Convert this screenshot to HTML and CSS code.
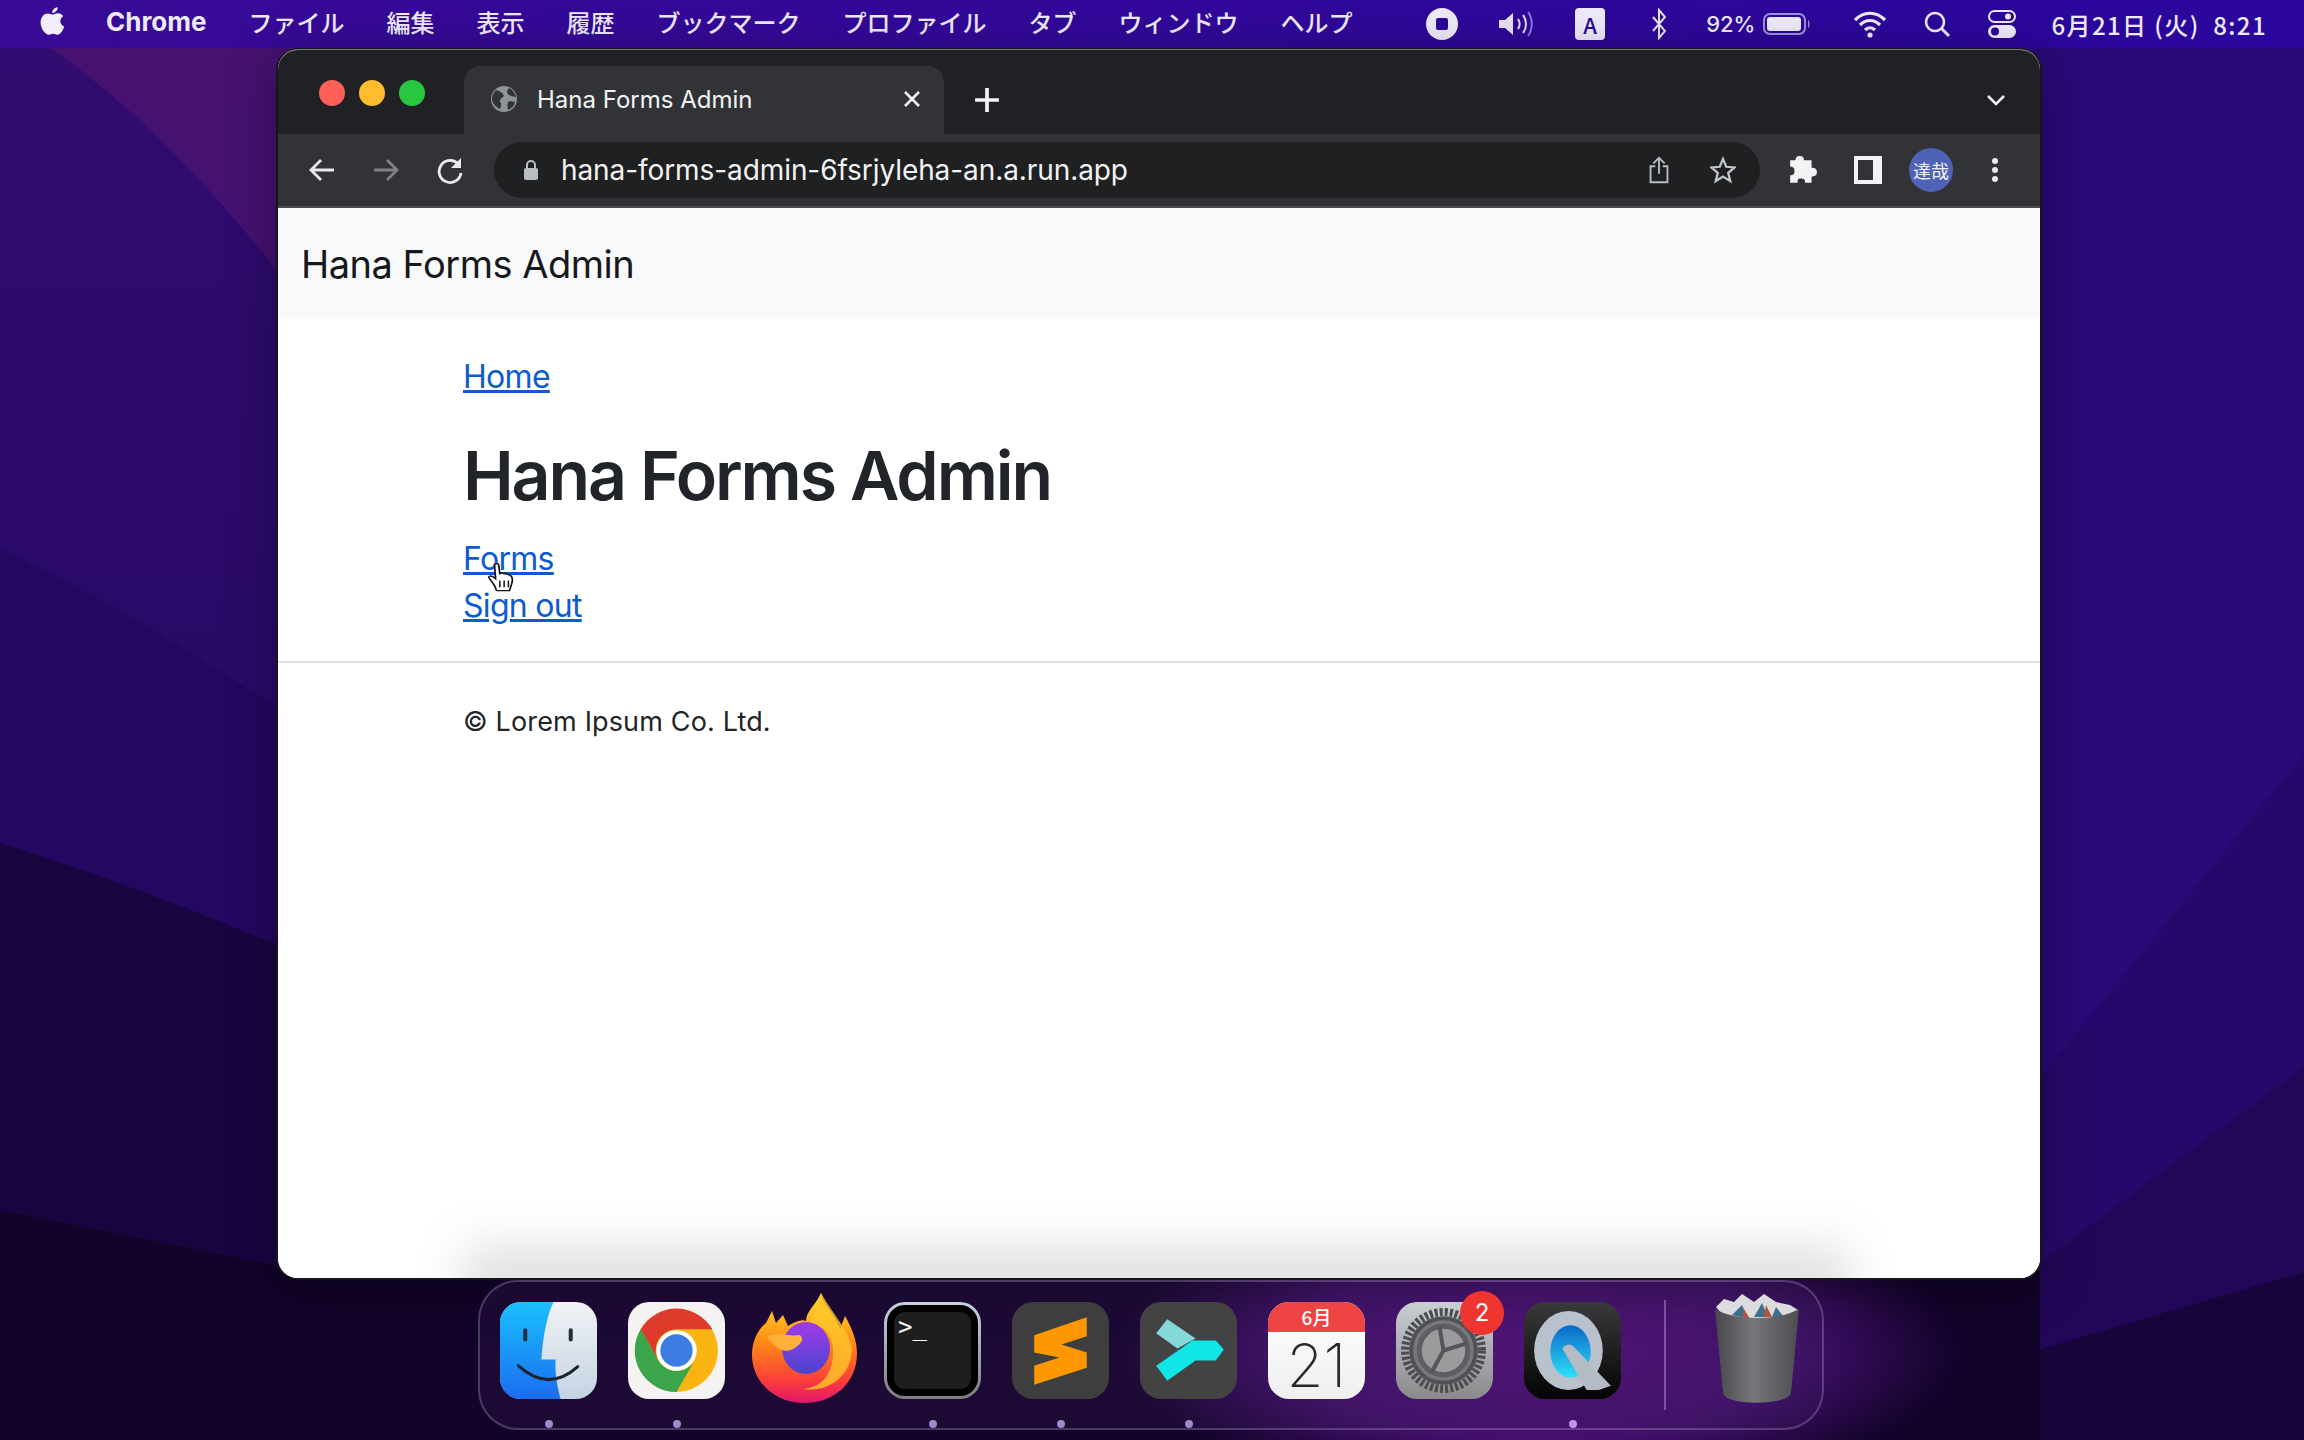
FILE: index.html
```html
<!DOCTYPE html>
<html lang="ja">
<head>
    <meta charset="UTF-8">
    <title>Hana Forms Admin</title>
    <link rel="stylesheet" href="styles.css">
</head>
<body>
    <svg class="wallpaper" viewBox="0 0 2304 1440" preserveAspectRatio="none">
        <defs>
            <linearGradient id="wallLeft" x1="0" y1="0" x2="0" y2="1">
                <stop offset="0" stop-color="#300c70"/>
                <stop offset="1" stop-color="#290a66"/>
            </linearGradient>
            <radialGradient id="wallGlow">
                <stop offset="0" stop-color="#571080"/>
                <stop offset="0.6" stop-color="#42106c"/>
                <stop offset="1" stop-color="#42106c" stop-opacity="0"/>
            </radialGradient>
        </defs>
        <rect width="2304" height="1440" fill="#2a0a78"/>
        <rect y="48" width="300" height="700" fill="url(#wallLeft)"/>
        <path d="M50 48Q170 130 300 300V48Z" fill="#451270"/>
        <path d="M0 549Q150 620 300 724V1440H0Z" fill="#230760"/>
        <path d="M0 843Q150 890 300 955V1440H0Z" fill="#180540"/>
        <path d="M2030 1090L2304 754V1440H2030Z" fill="#27086a"/>
        <path d="M2030 1270L2304 1067V1440H2030Z" fill="#220758"/>
        <path d="M2030 1352L2304 1272V1440H2030Z" fill="#17043a"/>
        <path d="M0 1210L300 1270H2040V1440H0Z" fill="#120329"/>
        <ellipse cx="1540" cy="1350" rx="420" ry="150" fill="url(#wallGlow)"/>
    </svg>

    <!-- menu bar -->
    <header class="menubar">
        <nav class="menu-left">
            <svg class="apple" viewBox="0 0 24 28"><path d="M17 1c.2 2.300-2 5.200-5 5 0-2.500 2.400-4.800 5-5zM12 7.500c1.300 0 2.800-1.200 5-1.200 2 0 3.800 1 4.800 2.600-3.800 2.200-3 7.600.9 9-1 3-3.300 7.300-5.700 7.300-1.500 0-2.300-1-4-1s-2.600 1-4 1C6 25.200 2 19.500 2 14.500c0-5 3.300-7.900 6.300-7.900 1.600 0 2.800.9 3.700.9z" fill="#f1edfb"/></svg>
            <b class="app-name">Chrome</b>
            <span>ファイル</span>
            <span>編集</span>
            <span>表示</span>
            <span>履歴</span>
            <span>ブックマーク</span>
            <span>プロファイル</span>
            <span>タブ</span>
            <span>ウィンドウ</span>
            <span>ヘルプ</span>
        </nav>
        <div class="menu-right">
            <svg class="status-rec" viewBox="0 0 32 32"><circle cx="16" cy="16" r="16" fill="#efeafb"/><rect x="10" y="10" width="12" height="12" rx="2" fill="#2c0699"/></svg>
            <svg class="status-vol" viewBox="0 0 36 28"><path d="M2 10h6l8-7v22l-8-7H2z" fill="#e6e0f6"/><path d="M21 9c2 3 2 7 0 10M26 5c4 5 4 13 0 18" fill="none" stroke="#e6e0f6" stroke-width="2"/><path d="M31 2c5 7 5 17 0 24" fill="none" stroke="#8a79d8" stroke-width="2"/></svg>
            <span class="status-ime">A</span>
            <svg class="status-bt" viewBox="0 0 18 32"><path d="M3 9l12 14-6 7V2l6 7L3 23" fill="none" stroke="#e6e0f6" stroke-width="2"/></svg>
            <span class="status-pct">92%</span>
            <svg class="status-batt" viewBox="0 0 48 26"><rect x="1" y="3" width="41" height="20" rx="6" fill="none" stroke="#9e92dc" stroke-width="2"/><rect x="4" y="6" width="34" height="14" rx="3" fill="#efeafb"/><path d="M45 9c2 1 2 7 0 8z" fill="#9e92dc"/></svg>
            <svg class="status-wifi" viewBox="0 0 34 28"><path d="M2 10c9-9 21-9 30 0M7 15c6-6 14-6 20 0M12 20c3-3 7-3 10 0" fill="none" stroke="#efeafb" stroke-width="3.200"/><circle cx="17" cy="25" r="2.600" fill="#efeafb"/></svg>
            <svg class="status-search" viewBox="0 0 28 28"><circle cx="12" cy="12" r="9" fill="none" stroke="#efeafb" stroke-width="2.600"/><path d="M18.500 18.500L26 26" stroke="#efeafb" stroke-width="3"/></svg>
            <svg class="status-ctrl" viewBox="0 0 30 30"><rect x="2" y="2" width="26" height="11" rx="5.500" fill="none" stroke="#efeafb" stroke-width="2"/><circle cx="21" cy="7.500" r="3" fill="#efeafb"/><rect x="1" y="16" width="28" height="13" rx="6.500" fill="#efeafb"/><circle cx="8" cy="22.500" r="4" fill="#2c0699"/></svg>
            <span class="clock">6月21日 (火)&nbsp; 8:21</span>
        </div>
    </header>

    <!-- browser window -->
    <section class="browser">
        <div class="tabstrip">
            <div class="traffic">
                <i class="light red"></i><i class="light yellow"></i><i class="light green"></i>
            </div>
            <div class="tab">
                <svg class="favicon" viewBox="0 0 28 28"><circle cx="14" cy="14" r="13" fill="#8f9296"/><path d="M6 5c4 1 7 3 8 6-2 2-5 3-4 6 2 2 1 4 0 7-4-2-8-6-8-10 0-4 2-7 4-9zM19 3c3 1 6 5 7 9l-5-1c-3-1-4-3-4-5zM19 16l6 1c-1 4-3 6-7 8 0-3-2-5 1-9z" fill="#323337"/></svg>
                <span class="tab-title">Hana Forms Admin</span>
                <svg class="tab-close" viewBox="0 0 20 20"><path d="M3 3l14 14M17 3L3 17" stroke="#f1f3f4" stroke-width="2.600"/></svg>
            </div>
            <svg class="newtab" viewBox="0 0 24 24"><path d="M12 1v22M1 12h22" stroke="#f1f3f4" stroke-width="3.400"/></svg>
            <svg class="tab-list" viewBox="0 0 20 12"><path d="M2 2l8 8 8-8" fill="none" stroke="#f1f3f4" stroke-width="2.600"/></svg>
        </div>
        <div class="toolbar">
            <svg class="tool" viewBox="0 0 28 28"><path d="M26 14H4M13 4L3 14l10 10" fill="none" stroke="#e8eaed" stroke-width="2.800"/></svg>
            <svg class="tool" viewBox="0 0 28 28"><path d="M2 14h22M15 4l10 10-10 10" fill="none" stroke="#7f8184" stroke-width="2.800"/></svg>
            <svg class="tool" viewBox="0 0 28 28"><path d="M23 9a11 11 0 1 0 2 8" fill="none" stroke="#e8eaed" stroke-width="2.800"/><path d="M25 2v10H15z" fill="#e8eaed"/></svg>
            <div class="omnibox">
                <svg class="lock" viewBox="0 0 16 22"><path d="M4 9V6a4 4 0 0 1 8 0v3" fill="none" stroke="#b9bcc0" stroke-width="2"/><rect x="1" y="9" width="14" height="12" rx="2" fill="#b9bcc0"/></svg>
                <span class="url">hana-forms-admin-6fsrjyleha-an.a.run.app</span>
                <svg class="omni-icon" viewBox="0 0 24 32"><path d="M12 20V3M6 9l6-6 6 6" fill="none" stroke="#b9bcc0" stroke-width="2"/><path d="M8 12H3v17h18V12h-5" fill="none" stroke="#b9bcc0" stroke-width="2"/></svg>
                <svg class="omni-icon" viewBox="0 0 28 28"><path d="M14 2l3.500 8.500 9 .7-6.900 5.900 2.200 8.900L14 21l-7.800 4.900 2.200-8.900L1.500 11.200l9-.7z" fill="none" stroke="#c4c7ca" stroke-width="2.400"/></svg>
            </div>
            <svg class="ext" viewBox="0 0 28 28"><path d="M11 1c3 0 4 2 4 4h7v7c3 0 5 1 5 4s-2 4-5 4v6h-6c0-3-1-4-4-4s-3 1-3 4H2v-7c3 0 4-1 4-4s-1-4-4-4V5h5c0-2 1-4 4-4z" fill="#f1f3f4"/></svg>
            <svg class="side" viewBox="0 0 28 28"><path fill-rule="evenodd" d="M0 0h28v28H0zM4 4v20h15V4z" fill="#f1f3f4"/></svg>
            <span class="avatar">達哉</span>
            <svg class="dots" viewBox="0 0 8 28"><circle cx="4" cy="5" r="3" fill="#e8eaed"/><circle cx="4" cy="14" r="3" fill="#e8eaed"/><circle cx="4" cy="23" r="3" fill="#e8eaed"/></svg>
        </div>
        <div class="page">
            <div class="navbar">Hana Forms Admin</div>
            <main class="content">
                <a href="#" class="crumb">Home</a>
                <h1 class="page-title">Hana Forms Admin</h1>
                <ul class="links">
                    <li><a href="#">Forms</a></li>
                    <li><a href="#">Sign out</a></li>
                </ul>
            </main>
            <footer class="page-foot">© Lorem Ipsum Co. Ltd.</footer>
            <svg class="cursor" viewBox="0 0 28 38" preserveAspectRatio="none"><path d="M7 3c2-2 4-1 4 1l1 10 2-1 2 1 2 0 2 1 2 1c2 2 2 6 1 10l-2 8H9l-2-6-5-9c-1-2 1-3 3-2l3 3z" fill="#fff" stroke="#111" stroke-width="1.600"/><path d="M12 22v8M16 22v8M20 22v8" stroke="#111" stroke-width="1.400"/></svg>
            <div class="dock-shade"></div>
        </div>
    </section>

    <!-- dock -->
    <footer class="dock">
        <div class="dock-item">
            <svg class="app" viewBox="0 0 96 96"><defs><linearGradient id="fBlue" x1="0" y1="0" x2="0" y2="1"><stop offset="0" stop-color="#1bc0fd"/><stop offset="1" stop-color="#1a6df0"/></linearGradient><linearGradient id="fGrey" x1="0" y1="0" x2="0" y2="1"><stop offset="0" stop-color="#f0f3f6"/><stop offset="1" stop-color="#c5d3e2"/></linearGradient></defs><rect width="96" height="96" rx="21" fill="url(#fGrey)"/><path d="M21 0h32C46 14 42 38 41 57h14c-1 14 2 28 5 39H21C9 96 0 87 0 75V21C0 9 9 0 21 0z" fill="url(#fBlue)"/><path d="M25 28v9M70 28v9" stroke="#25303a" stroke-width="4" stroke-linecap="round"/><path d="M18 63Q48 90 77 64" fill="none" stroke="#1a2430" stroke-width="3" stroke-linecap="round"/></svg>
            <i class="dot"></i>
        </div>
        <div class="dock-item">
            <svg class="app" viewBox="0 0 96 96"><rect width="96" height="96" rx="21" fill="#f4f3f1"/><circle cx="48" cy="48" r="41" fill="#fbb512"/><path d="M12.500 27A41 41 0 0 1 83.500 27H48A21 21 0 0 0 30 58Z" fill="#dd3c2c"/><path d="M12.500 27L30 58A21 21 0 0 0 66 58L48 89A41 41 0 0 1 12.500 27Z" fill="#3aa54a"/><circle cx="48" cy="48" r="20" fill="#fff"/><circle cx="48" cy="48" r="16" fill="#3d7ce0"/></svg>
            <i class="dot"></i>
        </div>
        <div class="dock-item">
            <svg class="app firefox" viewBox="0 0 106 110"><defs><linearGradient id="fxA" x1="0" y1="0" x2="0" y2="1"><stop offset="0" stop-color="#ffe226"/><stop offset="0.45" stop-color="#ff8a16"/><stop offset="0.8" stop-color="#fa3d3a"/><stop offset="1" stop-color="#e3156d"/></linearGradient><linearGradient id="fxB" x1="0" y1="0" x2="0" y2="1"><stop offset="0" stop-color="#a03ce8"/><stop offset="1" stop-color="#4a44cf"/></linearGradient></defs><path d="M69 0C72 14 84 22 88 36L93 23C100 35 105 48 105 60C105 90 82 110 52 110C22 110 0 88 0 62C0 48 6 36 14 30L20 18L24 30L31 22L36 33C44 28 50 26 54 28C54 18 64 12 69 0Z" fill="url(#fxA)"/><path d="M69 0C60 20 56 30 60 30C78 34 84 50 80 70C76 90 60 96 50 96C80 100 100 80 100 55C96 36 80 20 69 0Z" fill="#ffc52a" opacity="0.8"/><ellipse cx="54" cy="55" rx="24" ry="26" fill="url(#fxB)"/><path d="M15 44C24 38 36 44 48 42C52 46 50 50 44 54C34 62 24 56 15 44Z" fill="#ffb03a"/></svg>
        </div>
        <div class="dock-item">
            <div class="app terminal"><div class="term-screen"><span>&gt;_</span></div></div>
            <i class="dot"></i>
        </div>
        <div class="dock-item">
            <svg class="app" viewBox="0 0 96 96"><rect width="96" height="96" rx="21" fill="#3e3e3e"/><path d="M22 33L74 15V34L49 42L74 50V65L22 82V63L47 55L22 50Z" fill="#ff9800"/></svg>
            <i class="dot"></i>
        </div>
        <div class="dock-item">
            <svg class="app" viewBox="0 0 96 96"><rect width="96" height="96" rx="21" fill="#434343"/><path d="M27 17L16 31L37 46L55 36Z" fill="#84d9d8"/><path d="M16 63L27 78L55 58H75L83 47L75 38H52Z" fill="#10e6e6"/></svg>
            <i class="dot"></i>
        </div>
        <div class="dock-item">
            <div class="app calendar">
                <span class="cal-month">6月</span>
                <span class="cal-day">21</span>
            </div>
        </div>
        <div class="dock-item">
            <svg class="app" viewBox="0 0 96 96"><defs><linearGradient id="sys" x1="0" y1="0" x2="0" y2="1"><stop offset="0" stop-color="#c9cfd4"/><stop offset="1" stop-color="#8a8a8c"/></linearGradient></defs><rect width="96" height="96" rx="21" fill="url(#sys)"/><circle cx="47" cy="48" r="38" fill="none" stroke="#4d4d50" stroke-width="8" stroke-dasharray="3 2"/><circle cx="47" cy="48" r="32" fill="#77787b" stroke="#505154" stroke-width="4"/><circle cx="47" cy="48" r="24" fill="#9a9b9d" stroke="#5d5e61" stroke-width="5"/><path d="M47 48L43 24M47 48L70 41M47 48L35 70" stroke="#55565a" stroke-width="4"/></svg>
            <span class="badge">2</span>
        </div>
        <div class="dock-item">
            <svg class="app" viewBox="0 0 96 96"><defs><linearGradient id="qtBg" x1="0" y1="0" x2="0" y2="1"><stop offset="0" stop-color="#3a3a3c"/><stop offset="1" stop-color="#040404"/></linearGradient><linearGradient id="qtB" x1="0" y1="0" x2="0" y2="1"><stop offset="0" stop-color="#0a68c8"/><stop offset="1" stop-color="#2ee0fa"/></linearGradient></defs><rect width="96" height="96" rx="21" fill="url(#qtBg)"/><ellipse cx="44" cy="48" rx="34" ry="39" fill="#b9c2cc"/><ellipse cx="46" cy="49" rx="20" ry="26" fill="url(#qtB)"/><path d="M38 46c2-4 8-5 11-2l37 39-12 4H62z" fill="#b4bbc4"/></svg>
            <i class="dot bright"></i>
        </div>
        <i class="dock-sep"></i>
        <div class="dock-item">
            <svg class="app trash" viewBox="0 0 86 110"><defs><linearGradient id="bin" x1="0" y1="0" x2="1" y2="0"><stop offset="0" stop-color="#47474b"/><stop offset="0.45" stop-color="#77777b"/><stop offset="1" stop-color="#4d4d51"/></linearGradient></defs><path d="M2 14l8-8 10 3 8-8 12 8 10-8 12 8 14 3 8 5-14 16H18z" fill="#dcdcde"/><path d="M18 22l10-10 6 14zM40 24l8-14 6 14zM58 24l4-10 8 10z" fill="#3f6f8c"/><path d="M30 16l6 10h-8zM52 12l6 12h-8z" fill="#b5543c"/><path d="M1 16c20 12 64 12 84 0l-8 84c-2 13-66 13-68 0z" fill="url(#bin)"/></svg>
        </div>
    </footer>
</body>
</html>
```
FILE: styles.css
```css
html, body {
    margin: 0;
    height: 100%;
}
body {
    width: 2304px;
    height: 1440px;
    position: relative;
    overflow: hidden;
    font-family: Inter, "Noto Sans CJK JP", sans-serif;
    background: #1c0a4c;
}
.wallpaper {
    position: absolute;
    inset: 0;
    width: 2304px;
    height: 1440px;
}

/* menu bar */
.menubar {
    position: absolute;
    top: 0;
    left: 0;
    right: 0;
    height: 48px;
    display: flex;
    align-items: center;
    justify-content: space-between;
    padding: 0 37px 0 38px;
    box-sizing: border-box;
    background: linear-gradient(90deg, #380a96, #2a069c);
    color: #efeafb;
    font-size: 24px;
    font-weight: 500;
    font-family: "Noto Sans CJK JP", sans-serif;
}
.menu-left, .menu-right {
    display: flex;
    align-items: center;
}
.menu-left {
    gap: 42px;
    padding-bottom: 5px;
}
.apple {
    width: 28px;
    height: 32px;
    margin-right: -2px;
}
.app-name {
    font-family: Inter, sans-serif;
    font-weight: 700;
    font-size: 26px;
}
.menu-right svg {
    display: block;
}
.status-rec { width: 32px; height: 32px; margin-right: 39px; }
.status-vol { width: 36px; height: 28px; margin-right: 42px; }
.status-ime {
    width: 30px;
    height: 32px;
    border-radius: 4px;
    background: #efeafb;
    color: #2c0699;
    text-align: center;
    line-height: 32px;
    font-size: 22px;
    margin-right: 45px;
}
.status-bt { width: 18px; height: 32px; margin-right: 38px; }
.status-pct { font-family: Inter, sans-serif; font-size: 22px; margin-right: 8px; }
.status-batt { width: 48px; height: 26px; margin-right: 42px; }
.status-wifi { width: 34px; height: 28px; margin-right: 36px; }
.status-search { width: 28px; height: 28px; margin-right: 36px; }
.status-ctrl { width: 30px; height: 30px; margin-right: 34px; }
.clock {
    font-size: 24px;
    letter-spacing: 1.4px;
}

/* browser window */
.browser {
    position: absolute;
    left: 278px;
    top: 50px;
    width: 1762px;
    height: 1228px;
    border-radius: 20px;
    overflow: hidden;
    display: flex;
    flex-direction: column;
    box-shadow: 0 -1px 0 0 #77777b, 0 0 0 2px #17151c, 0 8px 50px rgba(0, 0, 0, 0.35);
    background: #fff;
}
.tabstrip {
    height: 84px;
    flex: none;
    background: #202124;
    display: flex;
    align-items: flex-end;
}
.traffic {
    display: flex;
    gap: 14px;
    align-self: flex-start;
    padding: 30px 0 0 41px;
    width: 186px;
    box-sizing: border-box;
}
.light {
    width: 26px;
    height: 26px;
    border-radius: 50%;
}
.red { background: #fe5f57; }
.yellow { background: #febc2e; }
.green { background: #27c840; }
.tab {
    width: 480px;
    height: 68px;
    background: #323337;
    border-radius: 16px 16px 0 0;
    display: flex;
    align-items: center;
    padding: 0 22px 2px 26px;
    box-sizing: border-box;
    color: #f1f3f4;
    font-size: 24px;
}
.favicon { width: 28px; height: 28px; }
.tab-title {
    margin-left: 19px;
    flex: 1;
}
.tab-close { width: 20px; height: 20px; }
.newtab {
    width: 26px;
    height: 26px;
    margin: 0 0 21px 30px;
}
.tab-list {
    width: 20px;
    height: 12px;
    margin: 0 34px 28px auto;
}
.toolbar {
    height: 72px;
    flex: none;
    background: #323337;
    border-bottom: 2px solid #4b4c4f;
    display: flex;
    align-items: center;
    padding-left: 12px;
}
.tool {
    width: 28px;
    height: 28px;
    margin: 0 18px;
}
.omnibox {
    width: 1266px;
    height: 56px;
    margin-left: 12px;
    background: #1f2022;
    border-radius: 28px;
    display: flex;
    align-items: center;
    padding: 0 24px 0 29px;
    box-sizing: border-box;
    color: #f1f3f4;
    font-size: 28px;
}
.lock { width: 16px; height: 22px; }
.url {
    margin-left: 22px;
    flex: 1;
    letter-spacing: -0.08px;
}
.omni-icon {
    width: 26px;
    height: 30px;
    margin-left: 38px;
}
.ext {
    width: 30px;
    height: 30px;
    margin-left: 28px;
}
.side {
    width: 28px;
    height: 28px;
    margin-left: 36px;
}
.avatar {
    width: 44px;
    height: 44px;
    margin-left: 27px;
    border-radius: 50%;
    background: #4e62b8;
    color: #f1f3f4;
    font-size: 18px;
    font-weight: 400;
    line-height: 44px;
    text-align: center;
    font-family: "Noto Sans CJK JP", sans-serif;
}
.dots {
    width: 8px;
    height: 28px;
    margin-left: 38px;
}

/* page */
.page {
    flex: 1;
    position: relative;
    background: #fff;
    color: #212529;
    font-size: 32px;
}
.navbar {
    height: 111px;
    background: #f8f9fa;
    display: flex;
    align-items: center;
    padding: 0 0 0 23px;
    font-size: 38px;
    letter-spacing: -0.5px;
    color: #16181b;
    box-sizing: border-box;
}
.content {
    padding: 34px 0 0 185px;
    height: 308px;
    border-bottom: 2px solid #dee2e6;
}
a {
    color: #0d5bd0;
    text-decoration-thickness: 2.500px;
    letter-spacing: -0.7px;
}
.crumb {
    display: block;
    line-height: 48px;
}
.page-title {
    margin: 33px 0 0;
    font-size: 68px;
    font-weight: 600;
    letter-spacing: -2.1px;
    line-height: 82px;
    color: #212529;
}
.links {
    list-style: none;
    margin: 19px 0 0;
    padding: 0;
    line-height: 47px;
}
.page-foot {
    padding: 42px 0 0 185px;
    font-size: 27px;
    letter-spacing: 0.15px;
    color: #212529;
}
.cursor {
    position: absolute;
    left: 209px;
    top: 354px;
    width: 30px;
    height: 32px;
}
.dock-shade {
    position: absolute;
    left: 185px;
    right: 191px;
    bottom: -30px;
    height: 60px;
    background: rgba(0, 0, 0, 0.13);
    filter: blur(24px);
}

/* dock */
.dock {
    position: absolute;
    left: 478px;
    top: 1280px;
    width: 1346px;
    height: 150px;
    box-sizing: border-box;
    border: 2px solid rgba(190, 170, 220, 0.3);
    border-radius: 40px;
    background: rgba(60, 30, 90, 0.25);
    display: flex;
    align-items: flex-start;
    padding: 20px 0 0 20px;
    gap: 31px;
    font-weight: 400;
}
.dock-item {
    position: relative;
    width: 97px;
    height: 97px;
    flex: none;
}
.app {
    display: block;
    width: 97px;
    height: 97px;
}
.firefox {
    width: 106px;
    height: 110px;
    margin: -9px 0 0 -4px;
}
.dot {
    position: absolute;
    left: 45px;
    top: 118px;
    width: 8px;
    height: 8px;
    border-radius: 50%;
    background: #9d8bc9;
}
.dot.bright {
    background: #c88ff0;
}
.terminal {
    box-sizing: border-box;
    border-radius: 21px;
    background: linear-gradient(#c4d2e0, #7d7d80);
    padding: 3px;
}
.term-screen {
    height: 100%;
    box-sizing: border-box;
    border-radius: 18px;
    background: #1e1e1e;
    border: 7px solid #000;
    color: #fff;
    font-family: "DejaVu Sans Mono", monospace;
    font-size: 24px;
    padding: 1px 0 0 4px;
    line-height: 28px;
}
.calendar {
    border-radius: 21px;
    background: linear-gradient(#fff, #efefef);
    display: flex;
    flex-direction: column;
    align-items: center;
}
.cal-month {
    width: 100%;
    height: 30px;
    border-radius: 21px 21px 0 0;
    background: #ee4444;
    color: #fff;
    font-size: 19px;
    font-weight: 500;
    line-height: 30px;
    text-align: center;
    font-family: "Noto Sans CJK JP", sans-serif;
}
.cal-day {
    font-size: 60px;
    line-height: 66px;
    font-weight: 200;
    color: #2a2a2a;
}
.badge {
    position: absolute;
    right: -11px;
    top: -11px;
    width: 44px;
    height: 44px;
    border-radius: 50%;
    background: #ee3530;
    color: #fff;
    font-size: 24px;
    line-height: 44px;
    text-align: center;
}
.dock-sep {
    width: 2px;
    height: 110px;
    margin: -2px 15px 0 12px;
    background: rgba(210, 180, 235, 0.4);
    flex: none;
}
.trash {
    margin: -9px 0 0 2px;
    width: 86px;
    height: 110px;
}
```
